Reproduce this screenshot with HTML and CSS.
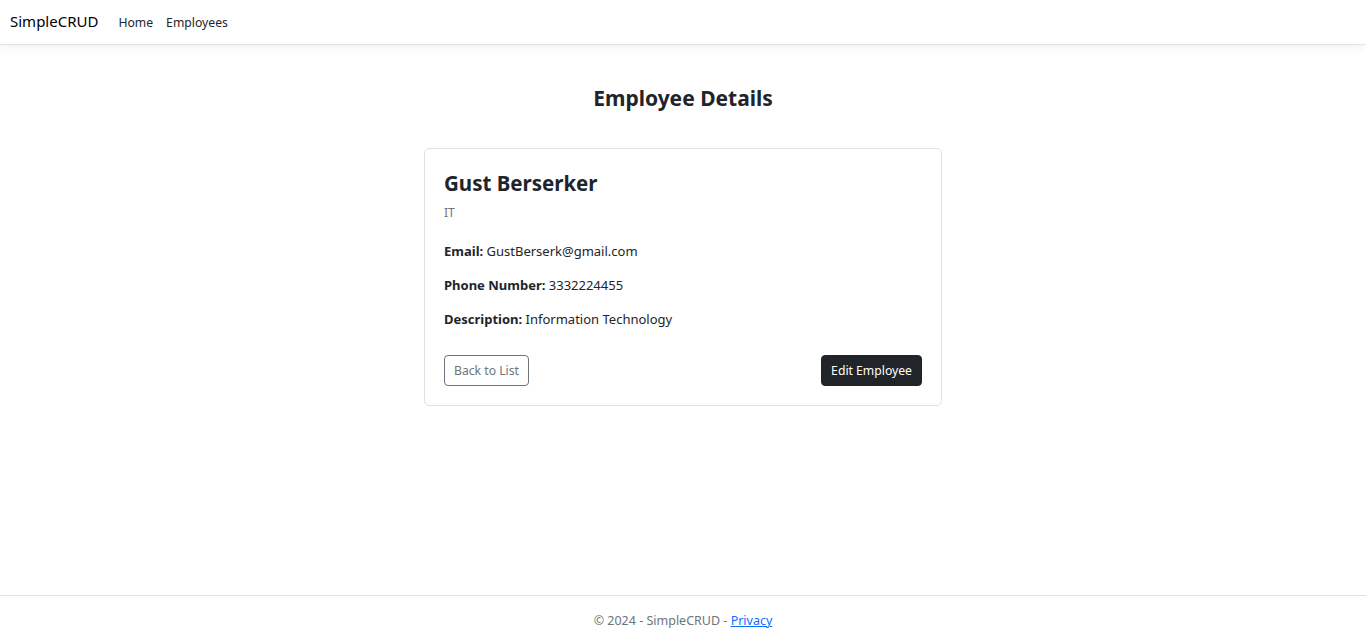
FILE: index.html
```html
<!DOCTYPE html>
<html lang="en">
<head>
<meta charset="utf-8">
<title>Employee Details - SimpleCRUD</title>
<link rel="stylesheet" href="styles.css">
</head>
<body>
<header class="navbar">
  <a class="brand" href="#">SimpleCRUD</a>
  <nav class="nav-links">
    <a class="nav-link" href="#">Home</a>
    <a class="nav-link" href="#">Employees</a>
  </nav>
</header>
<main class="main">
  <h2 class="page-title">Employee Details</h2>
  <div class="card">
    <h3 class="card-title">Gust Berserker</h3>
    <div class="card-subtitle">IT</div>
    <p class="field"><strong>Email:</strong> GustBerserk@gmail.com</p>
    <p class="field"><strong>Phone Number:</strong> 3332224455</p>
    <p class="field"><strong>Description:</strong> Information Technology</p>
    <div class="actions">
      <a class="btn btn-outline" href="#">Back to List</a>
      <a class="btn btn-dark" href="#">Edit Employee</a>
    </div>
  </div>
</main>
<footer class="footer">
  &copy; 2024 - SimpleCRUD - <a href="#" class="footer-link">Privacy</a>
</footer>
</body>
</html>
```
FILE: styles.css
```css
* { box-sizing: border-box; }
html, body { height: 100%; }
body {
  margin: 0;
  font-family: "Noto Sans", "Open Sans", sans-serif;
  color: #212529;
  background: #fff;
  display: flex;
  flex-direction: column;
  min-height: 100vh;
}
a { text-decoration: none; }
.navbar {
  height: 45px;
  display: flex;
  align-items: center;
  padding: 0 10px;
  border-bottom: 1px solid #e5e5e5;
  box-shadow: 0 3px 9px rgba(0,0,0,0.05);
}
.brand {
  font-size: 15px;
  color: #000;
  margin-right: 20px;
  margin-top: -2px;
}
.nav-links { display: flex; gap: 13px; }
.nav-link {
  font-size: 12.2px;
  color: #212529;
}
.main {
  flex: 1;
  display: flex;
  flex-direction: column;
  align-items: center;
}
.page-title {
  font-size: 21px;
  font-weight: 700;
  margin: 39px 0 36px;
  line-height: 28px;
}
.card {
  width: 518px;
  border: 1px solid #dfe2e5;
  border-radius: 5px;
  padding: 19px 19px 19px;
}
.card-title {
  margin: 1px 0 0;
  font-size: 20.5px;
  font-weight: 700;
  line-height: 28px;
}
.card-subtitle {
  font-size: 12px;
  color: #6c757d;
  margin-top: 8px;
  line-height: 16px;
}
.field {
  margin: 0;
  font-size: 13px;
  line-height: 18px;
  margin-top: 16px;
}
.field:first-of-type { margin-top: 21px; }
.field strong { font-weight: 700; }
.actions {
  display: flex;
  justify-content: space-between;
  margin-top: 27px;
}
.btn {
  display: inline-block;
  height: 31px;
  line-height: 29px;
  padding: 0 9px;
  font-size: 12.2px;
  border-radius: 4px;
  border: 1px solid transparent;
}
.btn-outline {
  color: #6c757d;
  border-color: #6c757d;
}
.btn-dark {
  background: #212529;
  border-color: #212529;
  color: #fff;
}
.footer {
  height: 49px;
  border-top: 1px solid #dee2e6;
  text-align: center;
  font-size: 12.5px;
  color: #6c757d;
  line-height: 50px;
}
.footer-link {
  color: #0d6efd;
  text-decoration: underline;
}
```
